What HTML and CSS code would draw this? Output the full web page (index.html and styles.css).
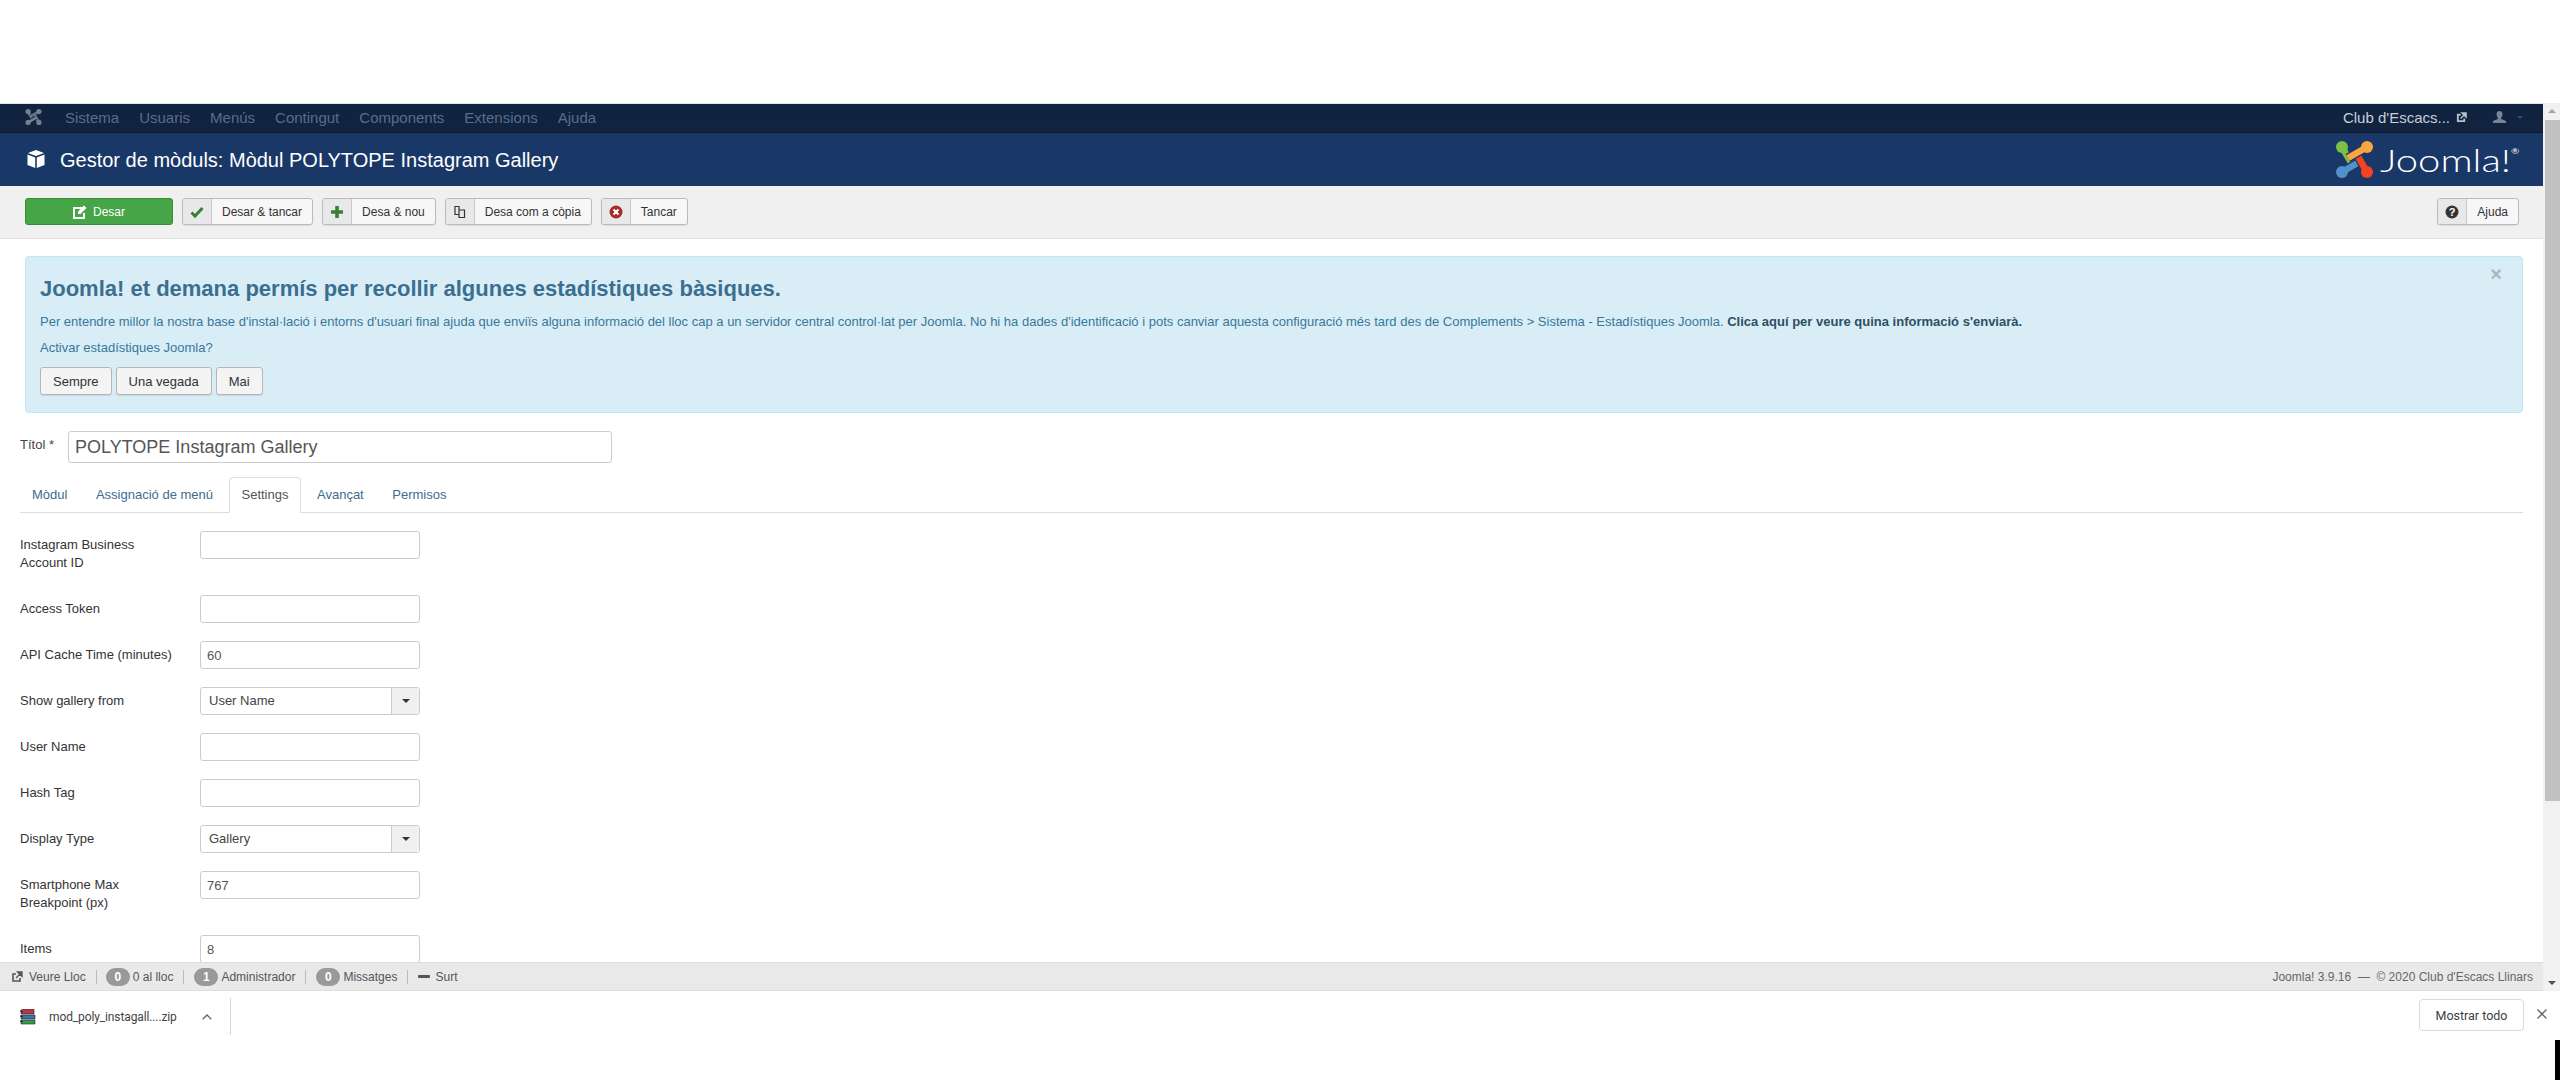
FILE: index.html
```html
<!DOCTYPE html>
<html lang="ca">
<head>
<meta charset="utf-8">
<title>Gestor de mòduls</title>
<link rel="stylesheet" href="styles.css">
</head>
<body>
<svg class="defs" width="0" height="0" aria-hidden="true">
  <defs>
    <g id="arm">
      <path class="arm-gap" d="M6 6 L17 25" fill="none" stroke-width="9"/>
      <path d="M6 6 L17 25" fill="none" stroke="currentColor" stroke-width="6.5"/>
      <circle cx="6" cy="6" r="6" fill="currentColor"/>
    </g>
  </defs>
</svg>
<div class="topgap"></div>
<div class="window">
  <div class="viewport">
    <div class="admin">
      <nav class="navbar">
        <svg class="nav-logo" viewBox="0 0 37 37">
          <use href="#arm"/>
          <use href="#arm" transform="rotate(90 18.5 18.5)"/>
          <use href="#arm" transform="rotate(180 18.5 18.5)"/>
          <use href="#arm" transform="rotate(270 18.5 18.5)"/>
        </svg>
        <ul class="menu">
          <li>Sistema</li><li>Usuaris</li><li>Menús</li><li>Contingut</li><li>Components</li><li>Extensions</li><li>Ajuda</li>
        </ul>
        <div class="nav-right">
          <span class="site">Club d'Escacs...</span>
          <svg class="ico-ext" viewBox="0 0 12 12"><path d="M9 7v3H2V3h3" fill="none" stroke="#b9c2cc" stroke-width="2"/><path d="M5 7l4-4M6.5 1H11v4.500z" stroke="#b9c2cc" stroke-width="1.500" fill="#b9c2cc"/></svg>
          <svg class="ico-user" viewBox="0 0 14 14"><path d="M7 0c2.200 0 3.200 1.500 3.200 3.500S9 7.500 8.500 8c0 1 4.500 1.500 5.500 3v2H0v-2c1-1.500 5.500-2 5.500-3C5 7.500 3.800 5.500 3.800 3.500S4.800 0 7 0z" fill="#75869a"/></svg>
          <span class="user-caret"></span>
        </div>
      </nav>
      <header class="subhead">
        <svg class="ico-cube" viewBox="0 0 18 18"><path d="M9 0l8 3-8 3-8-3zM.5 4.500l7.700 2.900V18L.5 15zM17.500 4.500L9.800 7.400V18l7.700-3z" fill="#fff"/></svg>
        <h1 class="page-title">Gestor de mòduls: Mòdul POLYTOPE Instagram Gallery</h1>
        <div class="brand">
          <svg class="brand-mark" viewBox="0 0 37 37">
            <use href="#arm" class="c-green"/>
            <use href="#arm" class="c-blue" transform="rotate(270 18.5 18.5)"/>
            <use href="#arm" class="c-red" transform="rotate(180 18.5 18.5)"/>
            <use href="#arm" class="c-orange" transform="rotate(90 18.5 18.5)"/>
          </svg>
          <span class="brand-box"><span class="brand-word">Joomla!<sup class="brand-reg">®</sup></span></span>
        </div>
      </header>
      <div class="toolbar">
        <button class="btn-save">
          <svg class="ico-14" viewBox="0 0 14 14"><path d="M10 3H1v10h10V8" fill="none" stroke="#fff" stroke-width="2"/><path d="M5 6.500l6-6 2.500 2.500-6 6H5z" fill="#fff"/></svg>
          Desar
        </button>
        <button class="tbtn"><span class="tbtn-ico"><svg class="ico-14" viewBox="0 0 14 14"><path d="M1.500 7.500l3.500 3.500 7.500-8" fill="none" stroke="#378137" stroke-width="3"/></svg></span><span class="tbtn-txt">Desar &amp; tancar</span></button>
        <button class="tbtn"><span class="tbtn-ico"><svg class="ico-14" viewBox="0 0 14 14"><path d="M5.200 1h3.600v4.200H13v3.600H8.800V13H5.200V8.800H1V5.200h4.200z" fill="#378137"/></svg></span><span class="tbtn-txt">Desa &amp; nou</span></button>
        <button class="tbtn"><span class="tbtn-ico"><svg class="ico-14" viewBox="0 0 14 14"><path d="M2 1.500h4v8H2zM6 5h5.500v7.500H6z" fill="none" stroke="#333" stroke-width="1.200"/></svg></span><span class="tbtn-txt">Desa com a còpia</span></button>
        <button class="tbtn"><span class="tbtn-ico"><svg class="ico-14" viewBox="0 0 14 14"><circle cx="7" cy="7" r="6.500" fill="#a9292a"/><path d="M4.500 4.500l5 5M9.500 4.500l-5 5" stroke="#fff" stroke-width="2"/></svg></span><span class="tbtn-txt">Tancar</span></button>
        <button class="tbtn help"><span class="tbtn-ico"><svg class="ico-14" viewBox="0 0 14 14"><circle cx="7" cy="7" r="6.500" fill="#333"/><text x="7" y="11" text-anchor="middle" class="help-q">?</text></svg></span><span class="tbtn-txt">Ajuda</span></button>
      </div>
      <main class="content">
        <section class="alert">
          <button class="alert-close">×</button>
          <h2 class="alert-title">Joomla! et demana permís per recollir algunes estadístiques bàsiques.</h2>
          <p class="alert-text">Per entendre millor la nostra base d'instal·lació i entorns d'usuari final ajuda que enviïs alguna informació del lloc cap a un servidor central control·lat per Joomla. No hi ha dades d'identificació i pots canviar aquesta configuració més tard des de Complements &gt; Sistema - Estadístiques Joomla. <strong class="alert-strong">Clica aquí per veure quina informació s'enviarà.</strong></p>
          <p class="alert-q">Activar estadístiques Joomla?</p>
          <div class="alert-btns">
            <button class="abtn">Sempre</button><button class="abtn">Una vegada</button><button class="abtn">Mai</button>
          </div>
        </section>
        <div class="title-row">
          <label class="title-label">Títol *</label>
          <input class="title-input" value="POLYTOPE Instagram Gallery">
        </div>
        <ul class="tabs">
          <li class="tab">Mòdul</li><li class="tab">Assignació de menú</li><li class="tab active">Settings</li><li class="tab">Avançat</li><li class="tab">Permisos</li>
        </ul>
        <div class="form">
          <div class="row"><label class="lbl">Instagram Business Account ID</label><input class="field"></div>
          <div class="row"><label class="lbl">Access Token</label><input class="field"></div>
          <div class="row"><label class="lbl">API Cache Time (minutes)</label><input class="field" value="60"></div>
          <div class="row"><label class="lbl">Show gallery from</label><div class="chosen"><span class="chosen-val">User Name</span><span class="chosen-btn"><i class="caret"></i></span></div></div>
          <div class="row"><label class="lbl">User Name</label><input class="field"></div>
          <div class="row"><label class="lbl">Hash Tag</label><input class="field"></div>
          <div class="row"><label class="lbl">Display Type</label><div class="chosen"><span class="chosen-val">Gallery</span><span class="chosen-btn"><i class="caret"></i></span></div></div>
          <div class="row"><label class="lbl">Smartphone Max Breakpoint (px)</label><input class="field" value="767"></div>
          <div class="row"><label class="lbl">Items</label><input class="field" value="8"></div>
        </div>
      </main>
      <footer class="status">
        <span class="st first"><svg class="ico-12" viewBox="0 0 12 12"><path d="M9 7v3H2V3h3" fill="none" stroke="#555" stroke-width="1.600"/><path d="M5 7l4-4M6.500 1H11v4.500z" stroke="#555" stroke-width="1.300" fill="#555"/></svg>Veure Lloc</span>
        <span class="st"><b class="badge">0</b>0 al lloc</span>
        <span class="st"><b class="badge">1</b>Administrador</span>
        <span class="st"><b class="badge">0</b>Missatges</span>
        <span class="st last"><i class="minus"></i>Surt</span>
        <span class="copy">Joomla! 3.9.16 &nbsp;—&nbsp; © 2020 Club d'Escacs Llinars</span>
      </footer>
    </div>
    <div class="scrollbar">
      <i class="arrow up"></i>
      <div class="thumb"></div>
      <i class="arrow down"></i>
    </div>
  </div>
  <div class="shelf">
    <div class="dl">
      <svg class="rar" viewBox="0 0 16 16">
        <path d="M1 1l3-1h10v5H1z" fill="#b23a48" stroke="#222" stroke-width=".6"/>
        <path d="M1 6h14v4H1z" fill="#3d6fb4" stroke="#222" stroke-width=".6"/>
        <path d="M1 11h14v4H1z" fill="#3b9a4a" stroke="#222" stroke-width=".6"/>
        <path d="M0 2l3 1M0 7l3 1M0 12l3 1" stroke="#222" stroke-width="1"/>
      </svg>
      <span class="dl-name">mod_poly_instagall....zip</span>
      <svg class="chev" viewBox="0 0 10 6"><path d="M.7 5.300L5 1l4.300 4.300" fill="none" stroke="#5f6368" stroke-width="1.300"/></svg>
    </div>
    <button class="show-all">Mostrar todo</button>
    <svg class="shelf-x" viewBox="0 0 10 10"><path d="M.5.500l9 9M9.500.500l-9 9" stroke="#5f6368" stroke-width="1.300"/></svg>
    <i class="corner"></i>
  </div>
</div>
</body>
</html>
```

FILE: styles.css
```css
* { box-sizing: border-box; }
html, body { margin: 0; height: 100%; overflow: hidden; background: #fff; }
body { font-family: "Liberation Sans", Arial, sans-serif; font-size: 13px; color: #333; display: flex; flex-direction: column; }
.defs { position: absolute; }
.topgap { height: 103px; flex: none; }
.window { flex: 1; display: flex; flex-direction: column; min-height: 0; }
.viewport { height: 888px; flex: none; display: flex; }
.admin { flex: 1; min-width: 0; display: flex; flex-direction: column; }

.navbar { height: 30px; flex: none; background: linear-gradient(#0f2340, #11233f); border-top: 1px solid #dfe3e6; border-bottom: 1px solid #0b1a30; display: flex; align-items: center; padding: 0 20px 2px 25px; font-size: 15px; }
.nav-logo { width: 17px; height: 16px; margin-right: 23px; color: #72818f; --gap: #10233f; }
.menu { list-style: none; display: flex; gap: 20px; margin: 0; padding: 0; color: #5a6d88; }
.nav-right { margin-left: auto; display: flex; align-items: center; color: #c6ced8; }
.ico-ext { width: 11px; height: 11px; margin-left: 6px; }
.ico-user { width: 13px; height: 13px; margin-left: 26px; }
.user-caret { width: 0; height: 0; border: 3.500px solid transparent; border-top: 3.500px solid #3d4c63; margin: 4px 0 0 11px; }

.subhead { height: 53px; flex: none; background: #1a3867; display: flex; align-items: center; padding: 0 26px 0 27px; }
.ico-cube { width: 18px; height: 18px; margin: 0 15px 2px 0; }
.page-title { margin: 2px 0 0; font-size: 20px; font-weight: 400; color: #fff; }
.brand { margin-left: auto; display: flex; align-items: center; --gap: #1a3867; }
.brand-mark { width: 37px; height: 37px; }
.arm-gap { stroke: var(--gap); }
.c-green { color: #7ac143; }
.c-orange { color: #f9a541; }
.c-red { color: #f44321; }
.c-blue { color: #5091cd; }
.brand-box { width: 137px; margin-left: 7px; display: block; }
.brand-word { display: inline-block; white-space: nowrap; font-family: Lato, sans-serif; font-weight: 300; font-size: 32px; line-height: 37px; color: #fff; transform: scaleX(1.250); transform-origin: left center; }
.brand-reg { font-size: 8px; vertical-align: 18px; line-height: 0; font-weight: 400; }

.toolbar { height: 53px; flex: none; background: #f0f0f0; border-bottom: 1px solid #e2e2e2; display: flex; align-items: center; padding: 0 24px 1px 25px; gap: 9px; }
.btn-save { width: 148px; height: 27px; background: #46a546; border: 1px solid #359035; border-radius: 3px; color: #fff; font: 12px "Liberation Sans", Arial, sans-serif; display: flex; align-items: center; justify-content: center; gap: 6px; padding: 0; }
.ico-14 { width: 14px; height: 14px; display: block; }
.ico-12 { width: 12px; height: 12px; margin-right: 6px; }
.tbtn { height: 27px; background: #f7f7f7; border: 1px solid #bbb; border-radius: 3px; padding: 0; display: flex; align-items: stretch; font: 12px "Liberation Sans", Arial, sans-serif; color: #333; box-shadow: 0 1px 1px rgba(0,0,0,.08); }
.tbtn-ico { width: 29px; background: #e8e8e8; border-right: 1px solid #c8c8c8; display: flex; align-items: center; justify-content: center; border-radius: 2px 0 0 2px; }
.tbtn-txt { display: flex; align-items: center; padding: 0 10px; }
.help { margin-left: auto; }
.help-q { font: bold 11px "Liberation Sans", Arial, sans-serif; fill: #fff; }

.content { flex: 1; min-height: 0; overflow: hidden; padding: 17px 20px 0; background: #fff; }
.alert { position: relative; height: 157px; margin-left: 5px; background: #d9edf7; border: 1px solid #bce8f1; border-radius: 4px; padding: 20px 14px 0; color: #38789a; }
.alert-close { position: absolute; top: 6px; right: 20px; border: 0; background: none; padding: 0; font: bold 20px "Liberation Sans", Arial, sans-serif; color: #a5b8c2; }
.alert-title { margin: 0 0 12px; font-size: 22px; line-height: 24px; font-weight: 700; color: #3a6f8f; }
.alert-text { margin: 0 0 8px; line-height: 18px; font-size: 13px; }
.alert-strong { color: #2d4f63; }
.alert-q { margin: 0 0 10px; line-height: 18px; }
.alert-btns { display: flex; gap: 4px; }
.abtn { height: 28px; padding: 0 12px; background: #f4f4f4; border: 1px solid #b7b7b7; border-radius: 3px; font: 13px "Liberation Sans", Arial, sans-serif; color: #333; box-shadow: 0 1px 1px rgba(0,0,0,.1); }

.title-row { display: flex; margin-top: 18px; }
.title-label { width: 48px; padding-top: 5px; line-height: 18px; color: #444; }
.title-input { width: 544px; height: 32px; border: 1px solid #ccc; border-radius: 3px; padding: 0 6px; font: 18px "Liberation Sans", Arial, sans-serif; color: #555; }

.tabs { list-style: none; display: flex; height: 36px; margin: 14px 0 0; padding: 0; border-bottom: 1px solid #ddd; gap: 2.500px; color: #3f6b8f; }
.tab { height: 36px; padding: 0 12px; line-height: 33px; border: 1px solid transparent; border-bottom: 0; }
.tab:first-child { margin-left: -1px; }
.tab.active { background: #fff; border-color: #ddd; border-bottom: 1px solid #fff; border-radius: 4px 4px 0 0; color: #555; }

.form { margin-top: 18px; }
.row { display: flex; margin-bottom: 18px; align-items: flex-start; }
.lbl { width: 180px; flex: none; padding: 5px 20px 5px 0; line-height: 18px; color: #333; }
.field { width: 220px; height: 28px; border: 1px solid #ccc; border-radius: 3px; padding: 0 6px; font: 13px "Liberation Sans", Arial, sans-serif; color: #555; }
.chosen { width: 220px; height: 28px; border: 1px solid #ccc; border-radius: 3px; display: flex; font-size: 13px; color: #444; }
.chosen-val { flex: 1; padding-left: 8px; line-height: 25px; }
.chosen-btn { width: 28px; background: #f0f0f0; border-left: 1px solid #ccc; display: flex; align-items: center; justify-content: center; }
.caret { width: 0; height: 0; border: 4px solid transparent; border-top: 4px solid #333; border-bottom: 0; }

.status { height: 29px; flex: none; background: #e9e9e9; border-top: 1px solid #ddd; border-bottom: 1px solid #ddd; display: flex; align-items: center; padding: 0 10px 0 11px; font-size: 12px; color: #555; margin-top: -1px; position: relative; }
.st { display: flex; align-items: center; height: 14px; padding-right: 10px; margin-right: 10px; border-right: 1px solid #bbb; }
.st.first { margin-right: 9px; }
.st.last { border: 0; }
.badge { width: 24px; height: 18px; border-radius: 9px; background: #999; color: #fff; font-size: 12px; font-weight: 700; display: flex; align-items: center; justify-content: center; margin-right: 3px; }
.minus { width: 12px; height: 3px; background: #555; margin-right: 5px; border-radius: 1px; }
.copy { margin-left: auto; color: #666; }

.scrollbar { width: 17px; flex: none; background: #f1f1f1; display: flex; flex-direction: column; align-items: center; }
.thumb { width: 15px; height: 681px; background: #c1c1c1; margin-left: 2px; flex: none; }
.arrow { width: 0; height: 0; border: 4px solid transparent; flex: none; }
.arrow.up { border-bottom: 4px solid #a3a3a3; border-top: 0; margin: 6px 0 7px; }
.arrow.down { border-top: 4px solid #505050; border-bottom: 0; margin-top: auto; margin-bottom: 6px; }

.shelf { flex: 1; position: relative; display: flex; align-items: flex-start; background: #fff; padding-top: 7px; }
.dl { width: 231px; height: 37px; flex: none; display: flex; align-items: center; padding-left: 20px; border-right: 1px solid #d5d7da; }
.rar { width: 16px; height: 16px; flex: none; margin-right: 13px; }
.dl-name { font: 12px Roboto, sans-serif; letter-spacing: -.12px; color: #444; width: 130px; white-space: nowrap; }
.chev { width: 10px; height: 6px; margin-left: 23px; }
.show-all { margin-left: auto; height: 32px; width: 105px; margin-top: 1px; background: #fff; border: 1px solid #dadce0; border-radius: 4px; font: 12.500px Roboto, sans-serif; color: #3c4043; padding: 0; }
.shelf-x { width: 10px; height: 10px; margin: 11px 13px 0 13px; flex: none; }
.corner { position: absolute; right: 0; bottom: 0; width: 5px; height: 40px; background: #000; }
```
